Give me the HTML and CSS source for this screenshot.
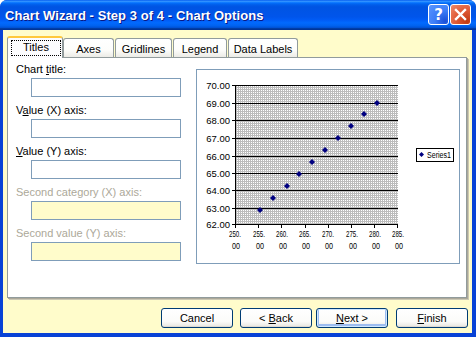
FILE: index.html
```html
<!DOCTYPE html>
<html>
<head>
<meta charset="utf-8">
<link rel="stylesheet" href="styles.css">
</head>
<body>
<div class="win">
  <div class="titlebar">
    <span class="title">Chart Wizard - Step 3 of 4 - Chart Options</span>
    <div class="tb-btns">
      <span class="tbtn help">?</span>
      <span class="tbtn close"><svg width="13" height="13" viewBox="0 0 13 13"><path d="M2 2 L11 11 M11 2 L2 11" stroke="#fff" stroke-width="2.4" stroke-linecap="square"/></svg></span>
    </div>
  </div>
  <div class="body">
    <div class="tabs">
      <div class="tab active"><span class="focus">Titles</span></div>
      <div class="tab w-axes">Axes</div>
      <div class="tab w-grid">Gridlines</div>
      <div class="tab w-legend">Legend</div>
      <div class="tab w-labels">Data Labels</div>
    </div>
    <div class="panel">
      <div class="fields">
        <div class="field"><div class="lbl">Chart <u>t</u>itle:</div><div class="input"></div></div>
        <div class="field"><div class="lbl">V<u>a</u>lue (X) axis:</div><div class="input"></div></div>
        <div class="field"><div class="lbl"><u>V</u>alue (Y) axis:</div><div class="input"></div></div>
        <div class="field disabled"><div class="lbl">Second category (X) axis:</div><div class="input"></div></div>
        <div class="field disabled"><div class="lbl">Second value (Y) axis:</div><div class="input"></div></div>
      </div>
      <div class="preview">
        <svg width="262" height="193" viewBox="0 0 262 193">
          <defs>
            <pattern id="dots" width="2" height="2" patternUnits="userSpaceOnUse">
              <rect width="2" height="2" fill="#bcbcbc"/>
              <rect width="1" height="1" fill="#ffffff"/>
            </pattern>
          </defs>
          <rect x="38" y="15" width="163" height="139" fill="url(#dots)"/>
          <g stroke="#000" stroke-width="1" shape-rendering="crispEdges">
            <line x1="35" y1="15.5" x2="201" y2="15.5"/>
            <line x1="35" y1="33.5" x2="201" y2="33.5"/>
            <line x1="35" y1="50.5" x2="201" y2="50.5"/>
            <line x1="35" y1="68.5" x2="201" y2="68.5"/>
            <line x1="35" y1="86.5" x2="201" y2="86.5"/>
            <line x1="35" y1="103.5" x2="201" y2="103.5"/>
            <line x1="35" y1="120.5" x2="201" y2="120.5"/>
            <line x1="35" y1="138.5" x2="201" y2="138.5"/>
            <line x1="35" y1="154.5" x2="201" y2="154.5"/>
            <line x1="38.5" y1="15" x2="38.5" y2="155"/>
            <line x1="38.5" y1="154" x2="38.5" y2="158"/>
            <line x1="61.5" y1="154" x2="61.5" y2="158"/>
            <line x1="84.5" y1="154" x2="84.5" y2="158"/>
            <line x1="108.5" y1="154" x2="108.5" y2="158"/>
            <line x1="131.5" y1="154" x2="131.5" y2="158"/>
            <line x1="154.5" y1="154" x2="154.5" y2="158"/>
            <line x1="177.5" y1="154" x2="177.5" y2="158"/>
            <line x1="200.5" y1="154" x2="200.5" y2="158"/>
          </g>
          <g class="ylab" text-anchor="end">
            <text x="33" y="19">70.00</text>
            <text x="33" y="37">69.00</text>
            <text x="33" y="54">68.00</text>
            <text x="33" y="72">67.00</text>
            <text x="33" y="90">66.00</text>
            <text x="33" y="107">65.00</text>
            <text x="33" y="124">64.00</text>
            <text x="33" y="142">63.00</text>
            <text x="33" y="158">62.00</text>
          </g>
          <g class="xlab">
            <text x="32" y="167" textLength="12" lengthAdjust="spacingAndGlyphs">250.</text><text x="35" y="179" textLength="8" lengthAdjust="spacingAndGlyphs">00</text>
            <text x="56" y="167" textLength="12" lengthAdjust="spacingAndGlyphs">255.</text><text x="59" y="179" textLength="8" lengthAdjust="spacingAndGlyphs">00</text>
            <text x="79" y="167" textLength="12" lengthAdjust="spacingAndGlyphs">260.</text><text x="82" y="179" textLength="8" lengthAdjust="spacingAndGlyphs">00</text>
            <text x="102" y="167" textLength="12" lengthAdjust="spacingAndGlyphs">265.</text><text x="105" y="179" textLength="8" lengthAdjust="spacingAndGlyphs">00</text>
            <text x="125" y="167" textLength="12" lengthAdjust="spacingAndGlyphs">270.</text><text x="128" y="179" textLength="8" lengthAdjust="spacingAndGlyphs">00</text>
            <text x="149" y="167" textLength="12" lengthAdjust="spacingAndGlyphs">275.</text><text x="152" y="179" textLength="8" lengthAdjust="spacingAndGlyphs">00</text>
            <text x="172" y="167" textLength="12" lengthAdjust="spacingAndGlyphs">280.</text><text x="175" y="179" textLength="8" lengthAdjust="spacingAndGlyphs">00</text>
            <text x="195" y="167" textLength="12" lengthAdjust="spacingAndGlyphs">285.</text><text x="198" y="179" textLength="8" lengthAdjust="spacingAndGlyphs">00</text>
          </g>
          <g fill="#000080">
            <polygon points="63,137 66,140 63,143 60,140"/>
            <polygon points="76,125 79,128 76,131 73,128"/>
            <polygon points="90,113 93,116 90,119 87,116"/>
            <polygon points="102,101 105,104 102,107 99,104"/>
            <polygon points="115,89 118,92 115,95 112,92"/>
            <polygon points="128,77 131,80 128,83 125,80"/>
            <polygon points="141,65 144,68 141,71 138,68"/>
            <polygon points="154,53 157,56 154,59 151,56"/>
            <polygon points="167,41 170,44 167,47 164,44"/>
            <polygon points="180,30 183,33 180,36 177,33"/>
          </g>
          <rect x="219.5" y="78.5" width="37" height="13" fill="#fff" stroke="#000" stroke-width="1"/>
          <polygon points="224.5,82 227,84.5 224.5,87 222,84.5" fill="#000080"/>
          <text class="leg" x="230" y="88" textLength="24" lengthAdjust="spacingAndGlyphs">Series1</text>
        </svg>
      </div>
    </div>
    <div class="buttons">
      <div class="btn b-cancel"><span>Cancel</span></div>
      <div class="btn b-back"><span>&lt; <u>B</u>ack</span></div>
      <div class="btn b-next default"><span><u>N</u>ext &gt;</span></div>
      <div class="btn b-finish"><span><u>F</u>inish</span></div>
    </div>
  </div>
</div>
</body>
</html>
```

FILE: styles.css
```css
* { box-sizing: border-box; }
html, body { margin: 0; padding: 0; }
body {
  width: 476px;
  height: 337px;
  overflow: hidden;
  background: #fff;
  font-family: "Liberation Sans", Arial, sans-serif;
  font-size: 11px;
  color: #000;
}
.win {
  width: 476px;
  height: 337px;
  display: flex;
  flex-direction: column;
  background: #0842d6;
  border-radius: 7px 7px 0 0;
  overflow: hidden;
}
.titlebar {
  height: 30px;
  flex: none;
  display: flex;
  align-items: center;
  padding: 0 5px 0 5px;
  background: linear-gradient(to bottom, #0058ee 0%, #3593ff 4%, #288eff 6%, #127dff 8%, #036ffc 10%, #0262ee 14%, #0057e5 20%, #0054e3 24%, #0055eb 56%, #005bf5 66%, #026afe 76%, #0062ef 86%, #0052d6 92%, #0040ab 94%, #003092 100%);
}
.title {
  flex: 1;
  color: #fff;
  font-weight: bold;
  font-size: 13px;
  letter-spacing: 0.07px;
  text-shadow: 1px 1px 0 #0a1883;
  padding-top: 1px;
}
.tb-btns {
  display: flex;
  gap: 1px;
  margin-top: -1px;
}
.tbtn {
  width: 21px;
  height: 21px;
  border: 1px solid #fff;
  border-radius: 3px;
  display: flex;
  align-items: center;
  justify-content: center;
}
.help {
  background: radial-gradient(circle at 85% 85%, #1a4fd8 0%, #3b7cf7 45%, #5a96ff 100%);
  color: #fff;
  font-weight: bold;
  font-size: 15px;
  font-family: "DejaVu Sans", sans-serif;
}
.close {
  background: radial-gradient(circle at 85% 85%, #c23a12 0%, #e05a36 50%, #ee8a6c 100%);
}
.body {
  flex: 1;
  margin: 0 4px 4px 3px;
  background: #fffccb;
  display: flex;
  flex-direction: column;
}
.tabs {
  display: flex;
  align-items: flex-end;
  margin-top: 6px;
  padding-left: 4px;
  height: 21px;
  position: relative;
  z-index: 1;
}
.tab {
  height: 19px;
  border: 1px solid #919b9c;
  border-bottom: none;
  border-radius: 3px 3px 0 0;
  background: linear-gradient(to bottom, #ffffff 0%, #fdfdfb 60%, #ecebe6 100%);
  display: flex;
  align-items: center;
  justify-content: center;
  margin-right: 1px;
  padding-top: 1px;
}
.tab.active {
  width: 56px;
  height: 22px;
  margin-bottom: -1px;
  background: #fcfcfe;
  border-top: 2px solid #ffc83c;
  align-items: flex-start;
  padding-top: 2px;
  margin-right: 0;
}
.focus {
  display: block;
  width: 50px;
  height: 16px;
  margin-left: 2px;
  border: 1px dotted #000;
  text-align: center;
  line-height: 13px;
}
.w-axes { width: 51px; }
.w-grid { width: 57px; }
.w-legend { width: 54px; }
.w-labels { width: 70px; }
.panel {
  margin-left: 4px;
  width: 460px;
  height: 241px;
  background: #fff;
  border: 1px solid #919b9c;
  box-shadow: 1px 1px 0 #aca899, 2px 2px 0 #cbc8b4;
  display: flex;
  padding: 5px 0 0 8px;
}
.fields {
  width: 165px;
  display: flex;
  flex-direction: column;
  gap: 7px;
}
.lbl {
  height: 13px;
  line-height: 13px;
  white-space: nowrap;
}
.input {
  margin-top: 2px;
  margin-left: 15px;
  width: 150px;
  height: 19px;
  border: 1px solid #7f9db9;
  background: #fff;
}
.disabled .lbl { color: #aca899; }
.disabled .input { background: #fffccb; }
.preview {
  margin-top: 6px;
  margin-left: 15px;
  width: 264px;
  height: 195px;
  border: 1px solid #7f9db9;
  background: #fff;
}
.preview svg { display: block; }
.ylab text {
  font-family: "Liberation Sans", Arial, sans-serif;
  font-size: 9.5px;
  fill: #000;
}
.xlab text {
  font-family: "Liberation Sans", Arial, sans-serif;
  font-size: 9px;
  fill: #000;
}
.leg {
  font-family: "Liberation Sans", Arial, sans-serif;
  font-size: 8.5px;
  fill: #000;
}
.buttons {
  display: flex;
  justify-content: flex-end;
  padding-right: 4px;
  margin-top: 10px;
}
.btn {
  width: 72px;
  height: 20px;
  border: 1px solid #003c74;
  border-radius: 3px;
  background: linear-gradient(to bottom, #ffffff 0%, #fbfbf9 70%, #ecebe6 92%, #d6d0c5 100%);
  display: flex;
  align-items: center;
  justify-content: center;
}
.btn span { white-space: pre; }
.b-back { margin-left: 7px; }
.b-next { margin-left: 4px; }
.b-finish { margin-left: 8px; }
.btn.default {
  box-shadow: inset 0 0 0 1px #cee7ff, inset 0 -1px 0 2px #9dbdf0;
}
u { text-decoration: underline; text-underline-offset: 1px; }
```
